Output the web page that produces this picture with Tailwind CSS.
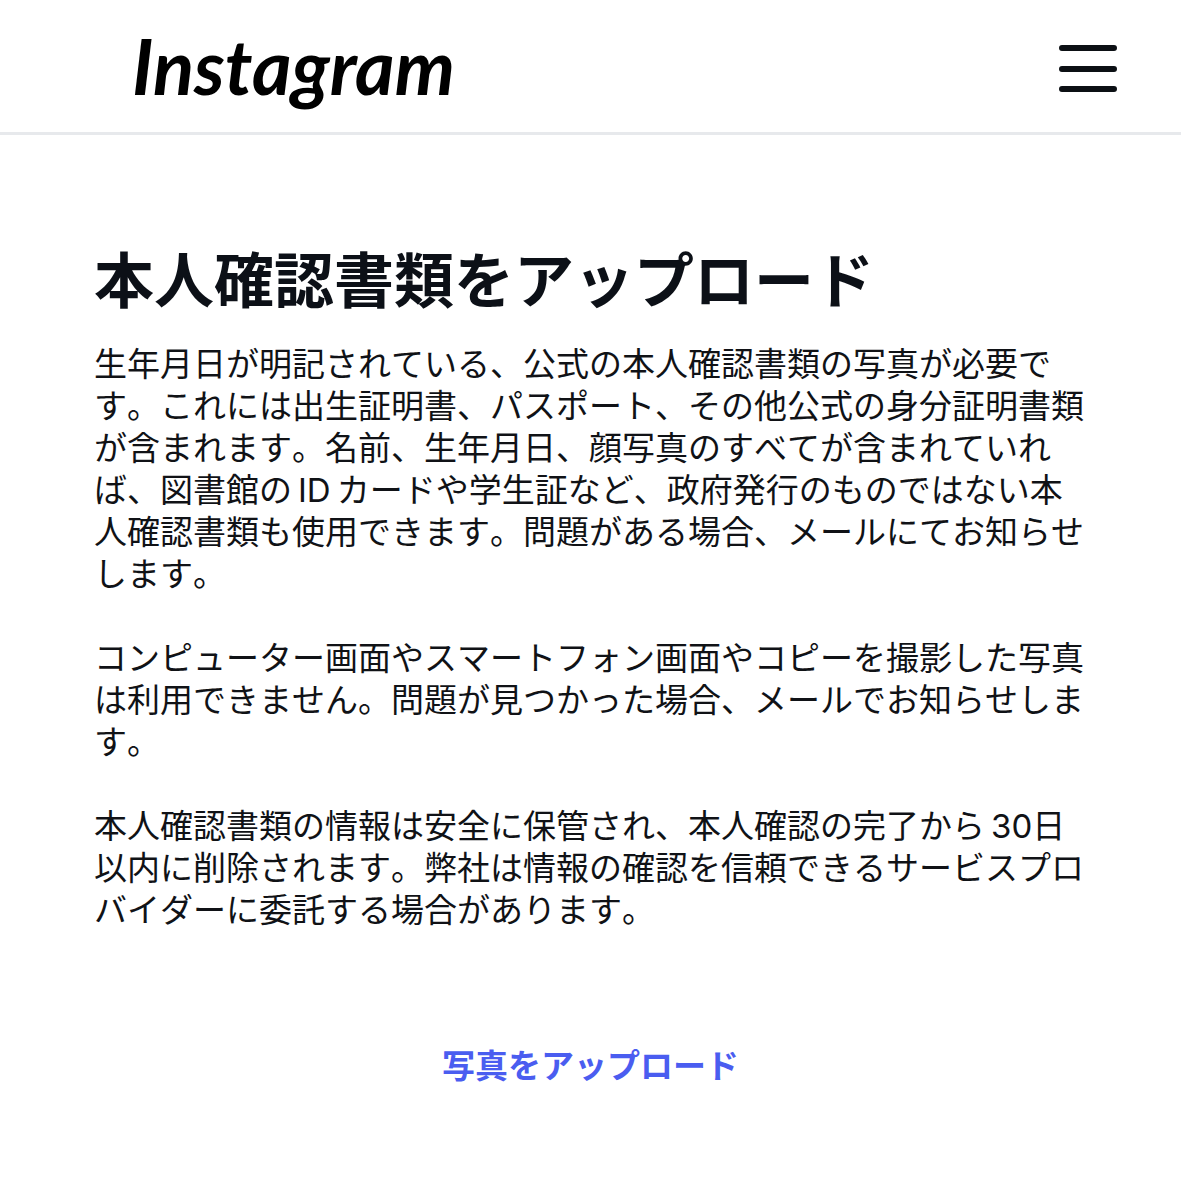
<!DOCTYPE html>
<html lang="ja">
<head>
  <meta charset="UTF-8" />
  <meta name="viewport" content="width=device-width, initial-scale=1.0" />
  <title>本人確認書類をアップロード</title>
  <script src="https://cdn.jsdelivr.net/npm/@tailwindcss/browser@4"></script>
</head>
<body class="bg-white min-h-screen text-[#101216] font-[Inter,'Noto_Sans_CJK_JP',sans-serif]">
<!-- Top bar -->
<header class="flex items-center justify-between h-[135px] pl-[132px] pr-16 border-b-3 border-[#e7e9ec]">
  <a href="#" class="text-[76px] leading-none font-bold italic text-black font-[Lato,sans-serif]">Instagram</a>
  <button type="button" aria-label="メニュー" class="mt-1.5">
    <svg width="58" height="48" viewBox="0 0 58 48" fill="none" stroke="#0c1014" stroke-width="6" stroke-linecap="round">
      <path d="M3 3h52M3 24h52M3 44h52" />
    </svg>
  </button>
</header>

<main class="px-[94px] pt-[110px] pb-16 [font-kerning:none]">
  <h1 class="text-[60px] leading-[72px] font-bold text-[#0c1017] mb-[26px]">本人確認書類をアップロード</h1>
  <div class="space-y-[42px] text-[33px] leading-[42px]">
    <p>生年月日が明記されている、公式の本人確認書類の写真が必要です。これには出生証明書、パスポート、その他公式の身分証明書類が含まれます。名前、生年月日、顔写真のすべてが含まれていれば、図書館の<span class="mx-1.5">ID</span>カードや学生証など、政府発行のものではない本人確認書類も使用できます。問題がある場合、メールにてお知らせします。</p>
    <p>コンピューター画面やスマートフォン画面やコピーを撮影した写真は利用できません。問題が見つかった場合、メールでお知らせします。</p>
    <p>本人確認書類の情報は安全に保管され、本人確認の完了から<span class="ml-1.5">30</span>日以内に削除されます。弊社は情報の確認を信頼できるサービスプロバイダーに委託する場合があります。</p>
  </div>
  <div class="mt-[114px] text-center">
    <button type="button" class="text-[33px] leading-[42px] font-semibold text-[#4a5df0] cursor-pointer">写真をアップロード</button>
  </div>
</main>
</body>
</html>
